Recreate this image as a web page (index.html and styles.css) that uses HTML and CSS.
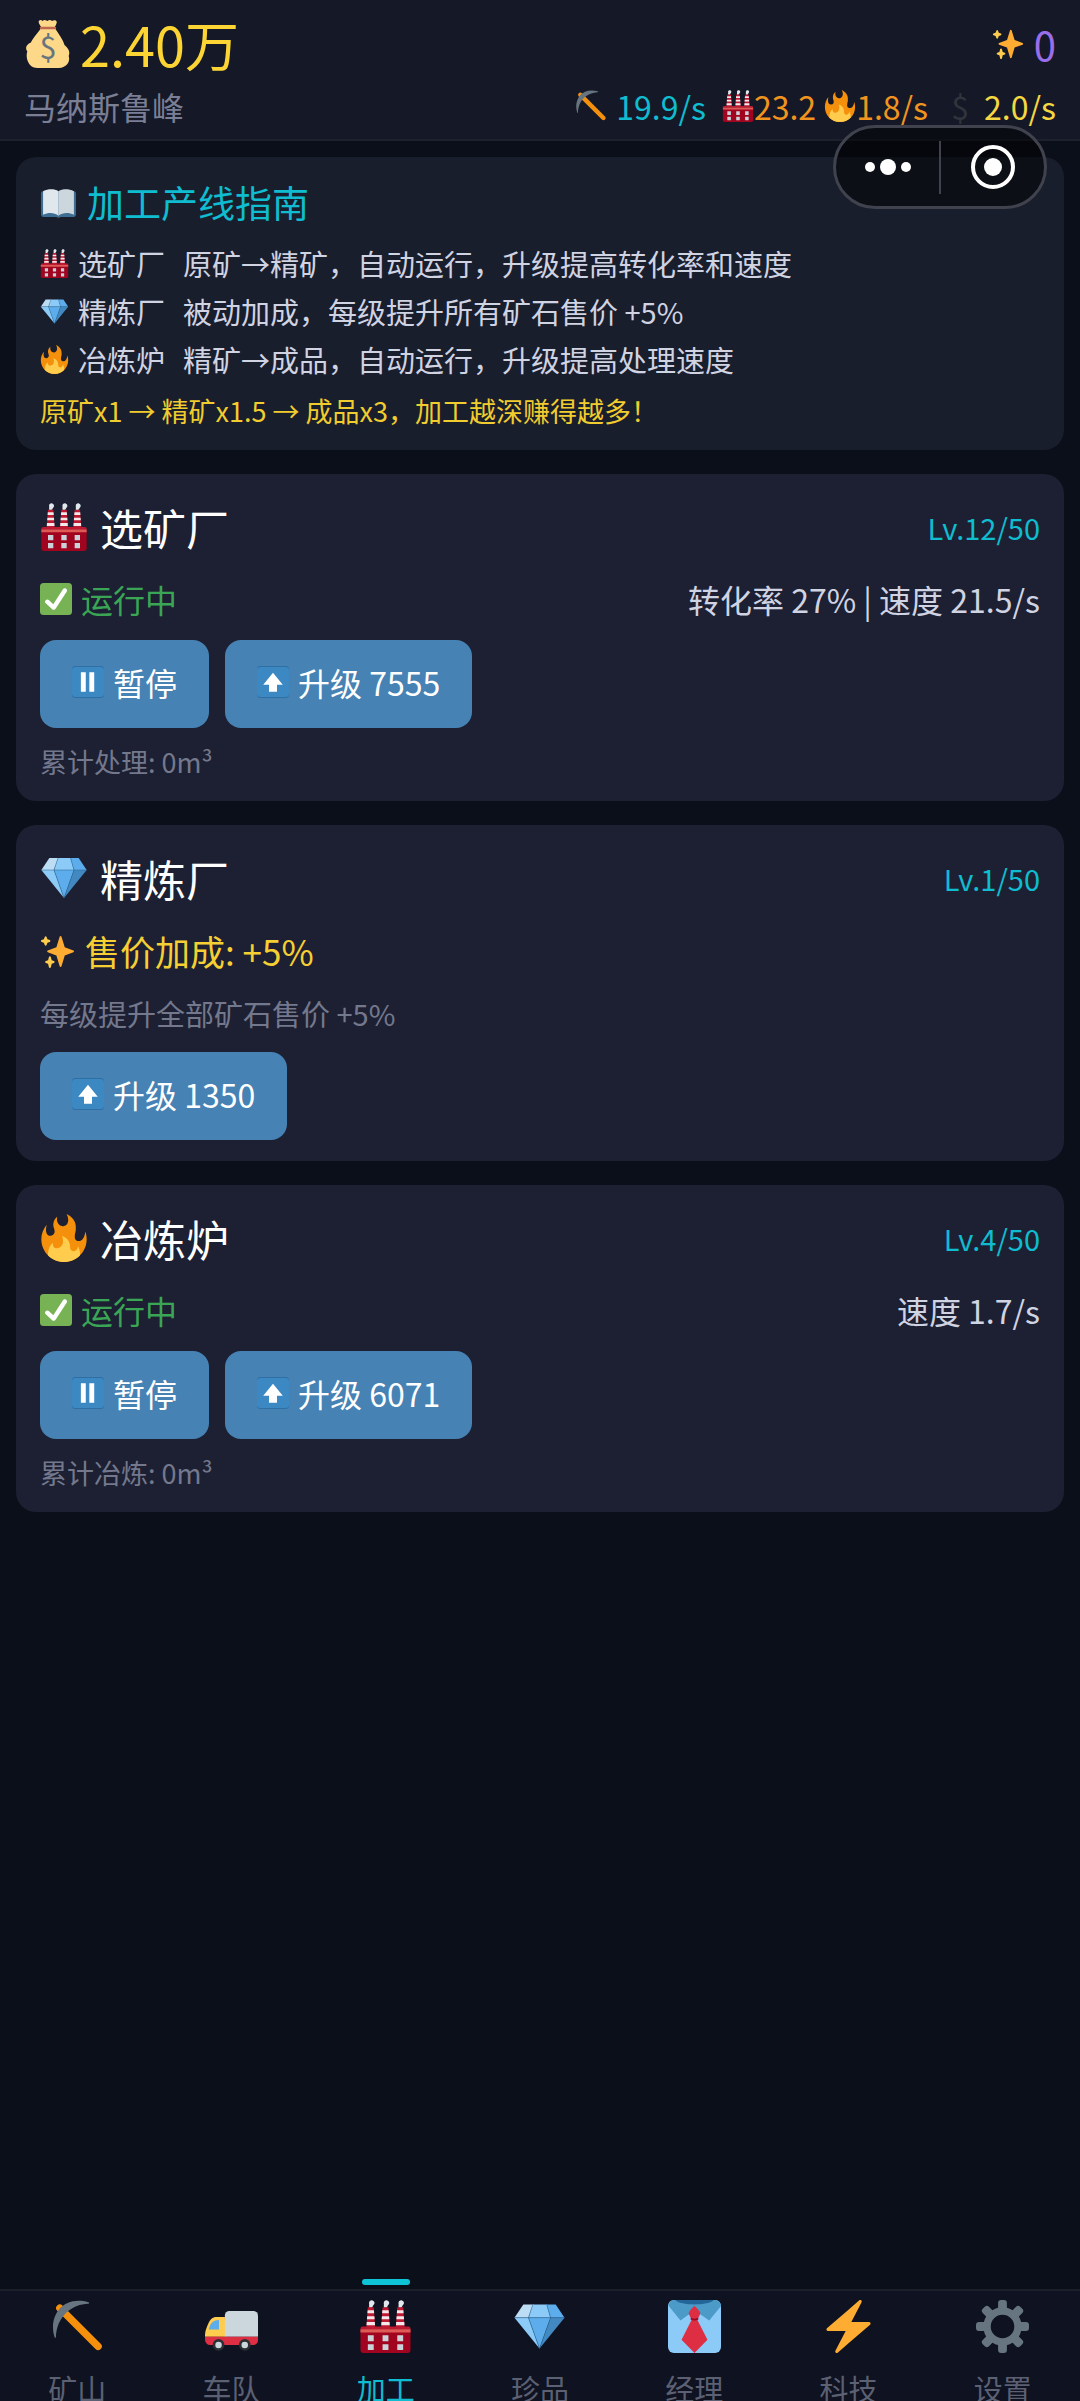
FILE: index.html
```html
<!DOCTYPE html>
<html lang="zh-CN">
<head>
    <meta charset="UTF-8">
    <meta name="viewport" content="width=device-width, initial-scale=1.0">
    <title>加工</title>
    <link rel="stylesheet" href="styles.css">
</head>
<body>
    <!-- shared icons -->
    <svg class="sprite" aria-hidden="true">
        <symbol id="i-sparkle" viewBox="0 0 36 36">
            <path fill="#FFAC33" d="M34.347 16.893l-8.899-3.294-3.323-10.891c-.128-.42-.517-.708-.956-.708-.439 0-.828.288-.956.708l-3.322 10.891-8.900 3.294c-.393.146-.653.519-.653.938 0 .418.260.793.653.938l8.895 3.293 3.324 11.223c.126.424.516.715.959.715.442 0 .833-.291.959-.716l3.324-11.223 8.896-3.293c.391-.144.652-.518.652-.937 0-.418-.261-.792-.653-.938z"/>
            <path fill="#FFCC4D" d="M14.347 27.894l-2.314-.856-.9-3.300c-.118-.436-.513-.738-.964-.738-.451 0-.846.302-.965.737l-.9 3.300-2.313.856c-.393.146-.653.520-.653.938 0 .418.260.793.653.938l2.301.853.907 3.622c.112.444.511.756.970.756.459 0 .858-.312.970-.757l.907-3.622 2.301-.853c.393-.144.653-.519.653-.937 0-.418-.260-.793-.653-.937zM10.009 6.231l-2.364-.875-.876-2.365c-.145-.393-.519-.653-.938-.653-.418 0-.792.260-.938.653l-.875 2.365-2.365.875c-.393.146-.653.520-.653.938 0 .418.260.793.653.938l2.365.875.875 2.365c.146.393.520.653.938.653.418 0 .792-.260.938-.653l.875-2.365 2.365-.875c.393-.146.653-.520.653-.938 0-.418-.260-.792-.653-.938z"/>
        </symbol>
        <symbol id="i-pick" viewBox="0 0 36 36">
            <path stroke="#F4900C" stroke-width="5" stroke-linecap="round" d="M6 5.500L32 31.500"/>
            <path fill="#66757F" d="M2.500 25.500C-2 12 7-3.500 25.500 1.500c.7.300.5 1-.2 1C20 2.700 15 4.500 10.500 8.500 6 13 3.700 18 3.300 25.300c-.1.700-.6.700-.8.200z"/>
        </symbol>
        <symbol id="i-factory" viewBox="0 0 36 36">
            <g id="stack">
                <path fill="#BE1931" d="M6 5h4l1 14H5z"/>
                <path fill="#F5E8EB" d="M5.850 7h4.300l.15 2H5.700zM5.550 11h4.900l.15 2h-5.200zM5.250 15h5.500l.15 2.200H5.100z"/>
                <path fill="#E1E8ED" d="M7 5c-.5-1.200.2-1.700-.2-2.700C6.700.8 8 0 9.200.3c1.400.4 1.800 2 .8 3C9.200 4 9.500 5 8.500 5z"/>
            </g>
            <use href="#stack" x="10"/>
            <use href="#stack" x="20"/>
            <path fill="#A0041E" d="M1 20h34v14a2 2 0 0 1-2 2H3a2 2 0 0 1-2-2z"/>
            <path fill="#BE1931" d="M2.500 18h31A1.500 1.500 0 0 1 35 19.500V20H1v-.5A1.500 1.500 0 0 1 2.500 18z"/>
            <path fill="#DD5A56" d="M1 19.800h34V22H1z"/>
            <path fill="#CCD0D8" d="M6 24h4v4H6zM16 24h4v4h-4zM26 24h4v4h-4zM6 30h4v4H6zM16 30h4v4h-4zM26 30h4v4h-4z"/>
        </symbol>
        <symbol id="i-fire" viewBox="0 0 36 36">
            <path fill="#F4900C" d="M35 19c0-2.062-.367-4.039-1.040-5.868-.460 5.389-3.333 8.157-6.335 6.868-2.812-1.208-.917-5.917-.777-8.164.236-3.809-.012-8.169-6.931-11.794 2.875 5.500.333 8.917-2.333 9.125-2.958.231-5.667-2.542-4.667-7.042-3.238 2.386-3.332 6.402-2.333 9 1.042 2.708-.042 4.958-2.583 5.208-2.840.280-4.418-3.041-2.963-8.333C2.520 10.965 1 14.805 1 19c0 9.389 7.611 17 17 17s17-7.611 17-17z"/>
            <path fill="#FFCC4D" d="M28.394 23.999c.148 3.084-2.561 4.293-4.019 3.709-2.106-.843-1.541-2.291-2.083-5.291s-2.625-5.083-5.708-6c2.250 6.333-1.247 8.667-3.080 9.084-1.872.426-3.753-.001-3.968-4.007C7.352 23.668 6 26.676 6 30c0 .368.023.730.055 1.090C9.125 34.124 13.342 36 18 36s8.875-1.876 11.945-4.910c.032-.360.055-.722.055-1.090 0-2.187-.584-4.236-1.606-6.001z"/>
        </symbol>
        <symbol id="i-gem" viewBox="0 0 36 36">
            <path fill="#BDDDF4" d="M7 3h7l-3.500 9H1z"/>
            <path fill="#8CCAF7" d="M13.500 3h9.500l2.500 9h-15z"/>
            <path fill="#5DADEC" d="M22.500 3H29l6 9h-9.500z"/>
            <path fill="#8CCAF7" d="M1 12h9.500L18 33z"/>
            <path fill="#5DADEC" d="M10.500 12h15L18 33z"/>
            <path fill="#4289C1" d="M25.500 12H35L18 33z"/>
            <path fill="none" stroke="#2A6797" stroke-width=".4" d="M1 12h34M13.500 3l-3 9L18 33l7.500-21-2.500-9"/>
        </symbol>
        <symbol id="i-book" viewBox="0 0 36 36">
            <path fill="#3E6E93" d="M1 9a2 2 0 0 1 2-2h30a2 2 0 0 1 2 2v21a2 2 0 0 1-2 2H20c-1 1-3 1-4 0H3a2 2 0 0 1-2-2z"/>
            <path fill="#E1E8ED" d="M3 7c5-2.500 11-2.500 15 0v24c-4-3.500-10-3.500-15-1z"/>
            <path fill="#CCD6DD" d="M33 7c-5-2.500-11-2.500-15 0v24c4-3.500 10-3.500 15-1z"/>
        </symbol>
        <symbol id="i-check" viewBox="0 0 36 36">
            <rect fill="#77B255" width="36" height="36" rx="4"/>
            <path fill="#FFF" d="M29.280 6.362c-1.156-.751-2.704-.422-3.458.736L14.936 23.877l-5.029-4.650c-1.014-.938-2.596-.875-3.533.138-.937 1.014-.875 2.596.139 3.533l7.209 6.666c.480.445 1.090.665 1.696.665.673 0 1.534-.282 2.099-1.139.332-.506 12.500-19.270 12.500-19.270.751-1.159.421-2.707-.737-3.458z"/>
        </symbol>
        <symbol id="i-pause" viewBox="0 0 36 36">
            <rect fill="#2F6FA3" width="36" height="36" rx="4"/>
            <rect fill="#3B88C3" y="1" width="36" height="34" rx="4"/>
            <path fill="#FFF" d="M10 7h5.500v22H10zM19.500 7H25v22h-5.500z"/>
        </symbol>
        <symbol id="i-up" viewBox="0 0 36 36">
            <rect fill="#2F6FA3" width="36" height="36" rx="4"/>
            <rect fill="#3B88C3" y="1" width="36" height="34" rx="4"/>
            <path fill="#FFF" d="M18 7.500L29 21h-6.500v8h-9v-8H7z"/>
        </symbol>
        <symbol id="i-truck" viewBox="0 0 36 36">
            <path fill="#FFCC4D" d="M13.500 11.500H8c-2.500 0-4 1-5.500 4C1 19 0 21 0 25h14z"/>
            <path fill="#5DADEC" d="M9.500 13.500v6.500H2.500c.8-3.500 2.500-6.500 7-6.500z"/>
            <path fill="#CCD6DD" d="M16.500 7.500H33a3 3 0 0 1 3 3V25H13.500V10.500a3 3 0 0 1 3-3z"/>
            <path fill="#DD2E44" d="M0 25h36v2.500a3 3 0 0 1-3 3H3.500A3.500 3.500 0 0 1 0 27z"/>
            <circle cx="9.200" cy="30.500" r="4" fill="#292F33"/>
            <circle cx="27" cy="30.500" r="4" fill="#292F33"/>
            <circle cx="9.200" cy="30.500" r="2.200" fill="#CCD6DD"/>
            <circle cx="27" cy="30.500" r="2.200" fill="#CCD6DD"/>
        </symbol>
        <symbol id="i-tie" viewBox="0 0 36 36">
            <rect fill="#8CCAF7" width="36" height="36" rx="4"/>
            <path fill="#4B9AC8" d="M4 0h28c2 0 4 2 4 4l-8 10-10-7-9.500 7L.5 4C1 1.500 2 0 4 0z"/>
            <path fill="#226699" d="M5 0h26c-3 4-23 4-26 0z"/>
            <path fill="#DD2E44" d="M18 4c2 1.500 3.200 3 4 5l-2 4.500 6.800 13.500L18 36l-8.800-9L16 13.500 14 9c.8-2 2-3.500 4-5z"/>
            <path fill="none" stroke="#A0041E" stroke-width="1.200" d="M15.500 12.500c1.500 1 3.500 1 5 0"/>
        </symbol>
        <symbol id="i-bolt" viewBox="0 0 36 36">
            <path fill="#FFAC33" d="M32.938 15.651C32.792 15.260 32.418 15 32 15H19.925L26.890 1.458c.219-.426.106-.947-.271-1.243C26.437.071 26.218 0 26 0c-.233 0-.466.082-.653.243L18 6.588 3.347 19.243c-.316.273-.430.714-.284 1.105S3.582 21 4 21h12.075L9.110 34.542c-.219.426-.106.947.271 1.243.182.144.401.215.619.215.233 0 .466-.082.653-.243L18 29.412l14.653-12.655c.317-.273.430-.714.285-1.106z"/>
        </symbol>
        <symbol id="i-gear" viewBox="0 0 36 36">
            <circle cx="18" cy="18" r="10.500" fill="none" stroke="#66757F" stroke-width="5"/>
            <g id="teeth" fill="#66757F">
                <rect x="15" width="6" height="8" rx="2"/>
                <rect x="15" y="28" width="6" height="8" rx="2"/>
                <rect y="15" width="8" height="6" rx="2"/>
                <rect x="28" y="15" width="8" height="6" rx="2"/>
            </g>
            <use href="#teeth" transform="rotate(45 18 18)"/>
        </symbol>
    </svg>

    <div class="app">
        <header class="header">
            <div class="row">
                <div class="money">
                    <svg class="icon" viewBox="0 0 36 36">
                        <path fill="#FDD888" d="M11 1c1-1.400 2-1 3-.3 1-1 2-.7 3.500 0 1.500-.9 2.500-.9 3.500 0 1.500-.8 3-.6 3.500.5.300 1.500-1 3-1.500 4.500h-10C12.500 4.500 10.700 2.500 11 1z"/>
                        <path fill="#FDD888" d="M12.500 6.500C9 11 6.500 14 5 17c-3 1-4.500 4-2.500 6.500C1 28 3 36 10 36h16c6 0 9-5 7.500-9 1.500-3-.5-6-3-8-1-4-4.500-8.500-7-12.500z"/>
                        <path stroke="#BF6952" stroke-width="2" stroke-linecap="round" d="M12.800 6h10.400"/>
                        <text x="18" y="29" text-anchor="middle" class="bag-sign">$</text>
                    </svg>
                    <span>2.40万</span>
                </div>
                <div class="stars"><svg class="icon"><use href="#i-sparkle"/></svg><span>0</span></div>
            </div>
            <div class="row">
                <span class="place">马纳斯鲁峰</span>
                <div class="rates">
                    <span class="rate mine"><svg class="icon"><use href="#i-pick"/></svg>19.9/s</span>
                    <span class="rate plant">
                        <svg class="icon"><use href="#i-factory"/></svg><span>23.2</span>
                        <svg class="icon fire"><use href="#i-fire"/></svg><span>1.8/s</span>
                    </span>
                    <span class="rate gold"><span class="dollar">$</span>2.0/s</span>
                </div>
            </div>
        </header>

        <main class="content">
            <section class="card guide">
                <h2 class="guide-title"><svg class="icon"><use href="#i-book"/></svg>加工产线指南</h2>
                <ul class="guide-list">
                    <li><svg class="icon"><use href="#i-factory"/></svg><span class="guide-name">选矿厂</span><span>原矿→精矿，自动运行，升级提高转化率和速度</span></li>
                    <li><svg class="icon"><use href="#i-gem"/></svg><span class="guide-name">精炼厂</span><span>被动加成，每级提升所有矿石售价 +5%</span></li>
                    <li><svg class="icon"><use href="#i-fire"/></svg><span class="guide-name">冶炼炉</span><span>精矿→成品，自动运行，升级提高处理速度</span></li>
                </ul>
                <p class="guide-tip">原矿x1 → 精矿x1.5 → 成品x3，加工越深赚得越多！</p>
            </section>

            <section class="card">
                <div class="row">
                    <h2 class="title"><svg class="icon"><use href="#i-factory"/></svg>选矿厂</h2>
                    <span class="level">Lv.12/50</span>
                </div>
                <div class="row status">
                    <span class="running"><svg class="icon"><use href="#i-check"/></svg>运行中</span>
                    <span>转化率 27% | 速度 21.5/s</span>
                </div>
                <div class="actions">
                    <button class="btn" type="button"><svg class="icon"><use href="#i-pause"/></svg>暂停</button>
                    <button class="btn" type="button"><svg class="icon"><use href="#i-up"/></svg>升级 7555</button>
                </div>
                <p class="total">累计处理: 0m³</p>
            </section>

            <section class="card">
                <div class="row">
                    <h2 class="title"><svg class="icon"><use href="#i-gem"/></svg>精炼厂</h2>
                    <span class="level">Lv.1/50</span>
                </div>
                <p class="bonus"><svg class="icon"><use href="#i-sparkle"/></svg>售价加成: +5%</p>
                <p class="desc">每级提升全部矿石售价 +5%</p>
                <div class="actions">
                    <button class="btn" type="button"><svg class="icon"><use href="#i-up"/></svg>升级 1350</button>
                </div>
            </section>

            <section class="card">
                <div class="row">
                    <h2 class="title"><svg class="icon"><use href="#i-fire"/></svg>冶炼炉</h2>
                    <span class="level">Lv.4/50</span>
                </div>
                <div class="row status">
                    <span class="running"><svg class="icon"><use href="#i-check"/></svg>运行中</span>
                    <span>速度 1.7/s</span>
                </div>
                <div class="actions">
                    <button class="btn" type="button"><svg class="icon"><use href="#i-pause"/></svg>暂停</button>
                    <button class="btn" type="button"><svg class="icon"><use href="#i-up"/></svg>升级 6071</button>
                </div>
                <p class="total">累计冶炼: 0m³</p>
            </section>
        </main>

        <nav class="tabs">
            <a class="tab" href="#mine"><svg class="icon"><use href="#i-pick"/></svg>矿山</a>
            <a class="tab" href="#fleet"><svg class="icon"><use href="#i-truck"/></svg>车队</a>
            <a class="tab active" href="#process"><svg class="icon"><use href="#i-factory"/></svg>加工</a>
            <a class="tab" href="#gems"><svg class="icon"><use href="#i-gem"/></svg>珍品</a>
            <a class="tab" href="#manager"><svg class="icon"><use href="#i-tie"/></svg>经理</a>
            <a class="tab" href="#tech"><svg class="icon"><use href="#i-bolt"/></svg>科技</a>
            <a class="tab" href="#settings"><svg class="icon"><use href="#i-gear"/></svg>设置</a>
        </nav>

        <!-- floating capsule -->
        <div class="capsule">
            <button type="button" aria-label="更多">
                <svg viewBox="0 0 48 48" fill="#fff"><circle cx="6" cy="24" r="5"/><circle cx="24" cy="24" r="8"/><circle cx="42" cy="24" r="5"/></svg>
            </button>
            <button type="button" aria-label="关闭">
                <svg viewBox="0 0 48 48"><circle cx="24" cy="24" r="20" fill="none" stroke="#fff" stroke-width="4"/><circle cx="24" cy="24" r="9" fill="#fff"/></svg>
            </button>
        </div>
    </div>
</body>
</html>
```
FILE: styles.css
```css
* {
    box-sizing: border-box;
    margin: 0;
    padding: 0;
}

body {
    font-family: 'Noto Sans CJK SC', sans-serif;
    font-size: 32px;
    color: #d0d3e2;
    background-color: #0b0f1a;
}

.sprite {
    position: absolute;
    width: 0;
    height: 0;
}

.bag-sign {
    font-size: 23px;
    fill: #67757f;
}

.app {
    position: relative;
    display: flex;
    flex-direction: column;
    height: 100vh;
    overflow: hidden;
}

.icon {
    flex: none;
    width: 32px;
    height: 32px;
}

.row {
    display: flex;
    justify-content: space-between;
    align-items: center;
}

/* header */
.header {
    padding: 5px 24px 10px;
    background-color: #151827;
    border-bottom: 2px solid #1d212d;
}

.money, .stars, .rate, .running, .title, .guide-title, .bonus {
    display: flex;
    align-items: center;
}

.money {
    gap: 8px;
    font-size: 54px;
    line-height: 78px;
    color: #fcd535;
}

.money .icon {
    width: 48px;
    height: 48px;
}

.stars {
    gap: 10px;
    font-size: 40px;
    line-height: 78px;
    color: #9a6ee8;
}

.place {
    line-height: 46px;
    color: #7b7f95;
}

.rates {
    display: flex;
    gap: 16px;
    line-height: 46px;
}

.mine {
    gap: 9px;
    color: #0fbcd0;
}

.plant {
    color: #f0941e;
}

.fire {
    margin-left: 8px;
}

.gold {
    gap: 8px;
    color: #f5d742;
}

.dollar {
    width: 32px;
    text-align: center;
    color: #30343c;
}

/* cards */
.content {
    flex: 1;
    display: flex;
    flex-direction: column;
    gap: 24px;
    padding: 16px;
}

.card {
    padding: 22px 24px 21px;
    border-radius: 20px;
    background-color: #1c2032;
}

.guide {
    background-color: #191e2d;
}

.guide-title {
    gap: 10px;
    font-size: 37px;
    font-weight: 400;
    line-height: 46px;
    color: #0fbcd0;
}

.guide-title .icon {
    width: 37px;
    height: 37px;
}

.guide-list {
    margin-top: 14px;
    list-style: none;
}

.guide-list li {
    display: flex;
    align-items: center;
    font-size: 29px;
    line-height: 48px;
}

.guide-list .icon {
    width: 29px;
    height: 29px;
}

.guide-name {
    margin: 0 18px 0 9px;
}

.guide-tip {
    margin-top: 10px;
    font-size: 27px;
    line-height: 36px;
    color: #f0cc2e;
}

.title {
    gap: 12px;
    font-size: 43px;
    font-weight: 400;
    line-height: 62px;
    color: #fff;
}

.title .icon {
    width: 48px;
    height: 48px;
}

.level {
    font-size: 29px;
    color: #0fbcd0;
}

.status {
    margin-top: 18px;
    line-height: 46px;
}

.running {
    gap: 9px;
    color: #3aa655;
}

.bonus {
    gap: 10px;
    margin-top: 17px;
    font-size: 35px;
    line-height: 50px;
    color: #f5cf33;
}

.bonus .icon {
    width: 35px;
    height: 35px;
}

.desc {
    margin-top: 16px;
    font-size: 29px;
    line-height: 42px;
    color: #74788d;
}

.actions {
    display: flex;
    gap: 16px;
    margin-top: 18px;
}

.btn {
    display: flex;
    align-items: center;
    gap: 9px;
    height: 88px;
    padding: 0 32px 4px;
    border: none;
    border-radius: 16px;
    font-family: inherit;
    font-size: 32px;
    color: #fff;
    background-color: #4682b4;
    cursor: pointer;
}

.total {
    margin-top: 16px;
    font-size: 27px;
    line-height: 36px;
    color: #74788d;
}

/* bottom tabs */
.tabs {
    flex: none;
    display: flex;
    height: 112px;
    background-color: #0f1220;
    border-top: 2px solid #1b1f2a;
}

.tab {
    position: relative;
    flex: 1;
    display: flex;
    flex-direction: column;
    align-items: center;
    gap: 14px;
    padding-top: 9px;
    font-size: 29px;
    line-height: 42px;
    text-decoration: none;
    color: #5b6073;
}

.tab .icon {
    width: 53px;
    height: 53px;
}

.tab.active {
    color: #0fbcd0;
}

.tab.active::before {
    content: "";
    position: absolute;
    top: -12px;
    width: 48px;
    height: 6px;
    border-radius: 3px;
    background-color: #0fc3d6;
}

/* capsule over the page corner */
.capsule {
    position: absolute;
    top: 125px;
    right: 33px;
    display: flex;
    align-items: center;
    width: 214px;
    height: 84px;
    border: 3px solid #40424d;
    border-radius: 42px;
    background-color: rgba(0, 0, 0, 0.5);
}

.capsule button {
    flex: 1;
    display: flex;
    justify-content: center;
    align-items: center;
    height: 53px;
    border: none;
    background: none;
}

.capsule button svg {
    width: 48px;
    height: 48px;
}

.capsule button + button {
    border-left: 2px solid #40424d;
}
```
